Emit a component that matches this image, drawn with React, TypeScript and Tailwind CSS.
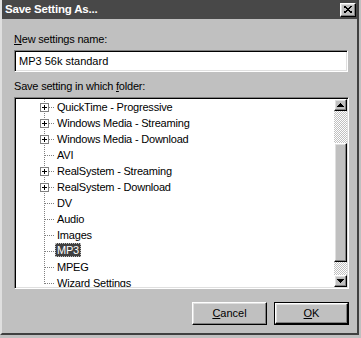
import React from "react";

type Item = { label: string; expandable?: boolean; selected?: boolean; last?: boolean };

const items: Item[] = [
  { label: "QuickTime - Progressive", expandable: true },
  { label: "Windows Media - Streaming", expandable: true },
  { label: "Windows Media - Download", expandable: true },
  { label: "AVI" },
  { label: "RealSystem - Streaming", expandable: true },
  { label: "RealSystem - Download", expandable: true },
  { label: "DV" },
  { label: "Audio" },
  { label: "Images" },
  { label: "MP3", selected: true },
  { label: "MPEG" },
  { label: "Wizard Settings", last: true },
];

const raised =
  "border border-t-white border-l-white border-r-black border-b-black shadow-[inset_-1px_-1px_0_#808080,inset_1px_1px_0_#dfdfdf]";

function TreeLines({ expandable, last }: { expandable?: boolean; last?: boolean }) {
  return (
    <svg width="20" height="16" className="shrink-0" shapeRendering="crispEdges">
      <line x1="9.5" y1="0" x2="9.5" y2={last ? 9 : 16} stroke="#808080" strokeDasharray="1 1" />
      <line x1={expandable ? 14 : 10} y1="8.5" x2="19" y2="8.5" stroke="#808080" strokeDasharray="1 1" />
      {expandable && (
        <>
          <rect x="5.5" y="4.5" width="8" height="8" fill="#fff" stroke="#808080" />
          <line x1="7" y1="8.5" x2="12" y2="8.5" stroke="#000" />
          <line x1="9.5" y1="6" x2="9.5" y2="11" stroke="#000" />
        </>
      )}
    </svg>
  );
}

function Arrow({ up }: { up?: boolean }) {
  return (
    <svg width="7" height="4" shapeRendering="crispEdges">
      <polygon points={up ? "3.5,0 7,4 0,4" : "0,0 7,0 3.5,4"} fill="#000" />
    </svg>
  );
}

export default function App() {
  return (
    <div className="w-[361px] h-[338px] bg-[#c0c0c0] font-['Liberation_Sans',Arial,sans-serif] text-[11px] leading-[13px] text-black">
      <div className="w-[359px] h-[335px] border-l-2 border-l-[#dfdfdf] border-r-2 border-r-[#404040] border-b-2 border-b-[#404040] flex flex-col">
        {/* title bar */}
        <div className="h-[19px] bg-[#484848] flex items-center justify-between pl-[3px] pr-[1px]">
          <span className="text-white font-bold text-[11.5px] tracking-[-0.2px]">Save Setting As...</span>
          <div className={`w-[16px] h-[14px] bg-[#c0c0c0] flex items-center justify-center ${raised}`}>
            <svg width="8" height="7" shapeRendering="crispEdges">
              <path d="M0 0 L8 7 M8 0 L0 7" stroke="#000" strokeWidth="1.6" />
            </svg>
          </div>
        </div>

        <div className="pl-[12px] flex flex-col">
          <div className="mt-[14px] tracking-[-0.2px]">
            <span className="underline">N</span>ew settings name:
          </div>
          <div className="mt-[4px] w-[334px] h-[22px] bg-white border border-t-[#808080] border-l-[#808080] border-r-white border-b-white shadow-[inset_1px_1px_0_#000,inset_-1px_-1px_0_#dfdfdf] flex items-center pl-[4px]">
            MP3 56k standard
          </div>

          <div className="mt-[8px] tracking-[-0.2px]">
            Save setting in which <span className="underline">f</span>older:
          </div>
          <div className="mt-[4px] w-[335px] h-[192px] bg-white border border-t-[#808080] border-l-[#808080] border-r-white border-b-white shadow-[inset_1px_1px_0_#000,inset_-1px_-1px_0_#dfdfdf] p-[1px] flex">
            <div className="flex-1 overflow-hidden pl-[19px] tracking-[-0.2px]">
              {items.map((it) => (
                <div key={it.label} className="h-[16px] flex items-center">
                  <TreeLines expandable={it.expandable} last={it.last} />
                  <span
                    className={
                      it.selected
                        ? "h-[14px] px-[2px] -mt-[2px] flex items-center bg-[#404040] text-white outline outline-1 outline-dotted outline-[#c0c0c0] -outline-offset-1"
                        : "h-[14px] px-[2px] flex items-center"
                    }
                  >
                    {it.label}
                  </span>
                </div>
              ))}
            </div>
            {/* scrollbar */}
            <div className="w-[13px] flex flex-col">
              <div className={`h-[12px] bg-[#c0c0c0] flex items-center justify-center ${raised}`}>
                <Arrow up />
              </div>
              <div className="h-[32px] bg-[repeating-conic-gradient(#ffffff_0%_25%,#c0c0c0_0%_50%)] bg-[length:2px_2px]" />
              <div className={`h-[119px] bg-[#c0c0c0] ${raised}`} />
              <div className="flex-1 bg-[repeating-conic-gradient(#ffffff_0%_25%,#c0c0c0_0%_50%)] bg-[length:2px_2px]" />
              <div className={`h-[12px] bg-[#c0c0c0] flex items-center justify-center ${raised}`}>
                <Arrow />
              </div>
            </div>
          </div>

          <div className="mt-[13px] w-[335px] flex justify-end gap-[7px]">
            <div className={`w-[75px] h-[23px] flex items-center justify-center bg-[#c0c0c0] ${raised}`}>
              <span>
                <span className="underline">C</span>ancel
              </span>
            </div>
            <div className="w-[75px] h-[23px] border border-black">
              <div className={`w-full h-full flex items-center justify-center bg-[#c0c0c0] ${raised}`}>
                <span>
                  <span className="underline">O</span>K
                </span>
              </div>
            </div>
          </div>
        </div>
      </div>
    </div>
  );
}
